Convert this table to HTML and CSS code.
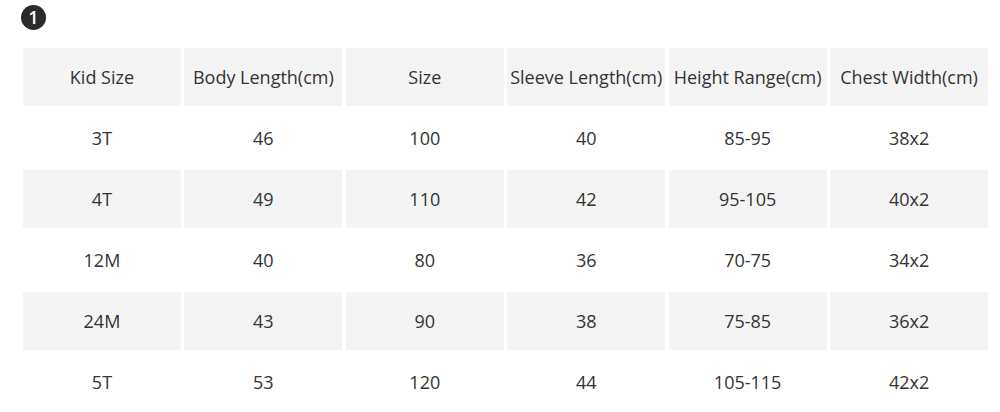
FILE: index.html
```html
<!DOCTYPE html>
<html>
<head>
<meta charset="utf-8">
<link rel="stylesheet" href="styles.css">
</head>
<body>
<div class="page">
  <div class="badge">1</div>
  <div class="table">
    <div class="row shade"><div class="cell">Kid Size</div><div class="cell">Body Length(cm)</div><div class="cell">Size</div><div class="cell">Sleeve Length(cm)</div><div class="cell">Height Range(cm)</div><div class="cell">Chest Width(cm)</div></div>
    <div class="row"><div class="cell">3T</div><div class="cell">46</div><div class="cell">100</div><div class="cell">40</div><div class="cell">85-95</div><div class="cell">38x2</div></div>
    <div class="row shade"><div class="cell">4T</div><div class="cell">49</div><div class="cell">110</div><div class="cell">42</div><div class="cell">95-105</div><div class="cell">40x2</div></div>
    <div class="row"><div class="cell">12M</div><div class="cell">40</div><div class="cell">80</div><div class="cell">36</div><div class="cell">70-75</div><div class="cell">34x2</div></div>
    <div class="row shade"><div class="cell">24M</div><div class="cell">43</div><div class="cell">90</div><div class="cell">38</div><div class="cell">75-85</div><div class="cell">36x2</div></div>
    <div class="row"><div class="cell">5T</div><div class="cell">53</div><div class="cell">120</div><div class="cell">44</div><div class="cell">105-115</div><div class="cell">42x2</div></div>
  </div>
</div>
</body>
</html>
```
FILE: styles.css
```css
html, body {
  margin: 0;
  padding: 0;
  background: #ffffff;
}
.page {
  padding: 5px 12px 0 23px;
  font-family: "Open Sans", "Liberation Sans", sans-serif;
  color: #333333;
}
.badge {
  width: 25px;
  height: 25px;
  margin-left: -2px;
  border-radius: 50%;
  background: #2b2b2b;
  color: #ffffff;
  font-size: 18px;
  font-weight: 600;
  line-height: 25px;
  text-align: center;
}
.table {
  margin-top: 18px;
  display: flex;
  flex-direction: column;
  gap: 3.5px;
}
.row {
  display: grid;
  grid-template-columns: repeat(6, 1fr);
  gap: 3.5px;
  height: 57.5px;
}
.cell {
  display: flex;
  align-items: center;
  justify-content: center;
  font-size: 18px;
  white-space: nowrap;
}
.shade .cell {
  background: #f4f4f4;
}
```
